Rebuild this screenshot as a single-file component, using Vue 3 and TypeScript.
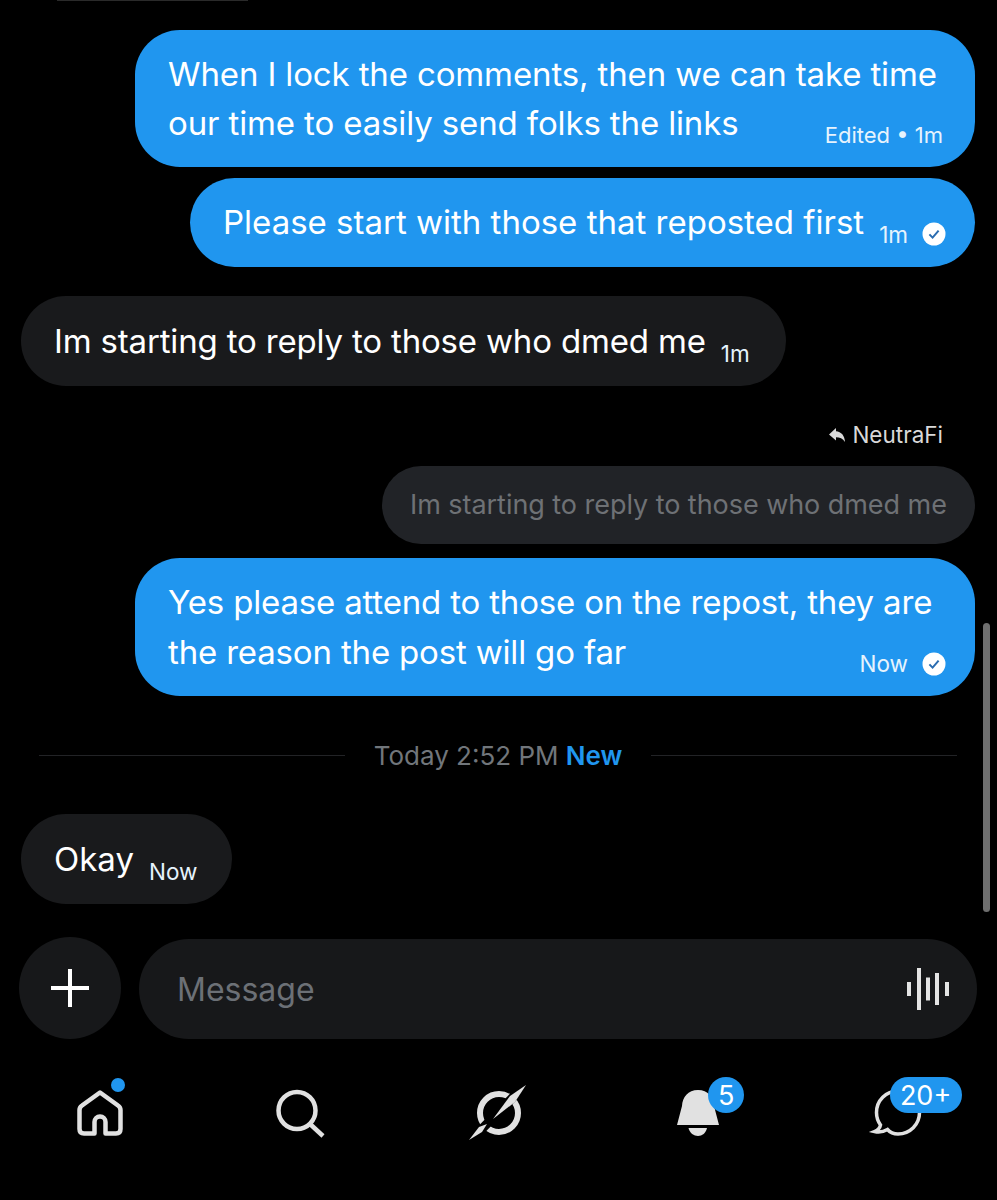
<script setup lang="ts">
const navCells = ['home', 'search', 'grok', 'bell', 'chat']
const waveBars = [
  { x: 1, h: 14 },
  { x: 11, h: 42 },
  { x: 20, h: 23 },
  { x: 29, h: 32 },
  { x: 39, h: 14 }
]
</script>

<template>
  <div class="screen">
    <div class="sliver"></div>

    <section class="thread">
      <div class="bubble mine first-bubble">
        <div>When I lock the comments, then we can take time</div>
        <div class="last-row">
          <span>our time to easily send folks the links</span>
          <span class="meta edited">Edited • 1m</span>
        </div>
      </div>

      <div class="bubble mine single second-bubble">
        <span>Please start with those that reposted first</span>
        <span class="meta lowered">1m</span>
        <svg class="seen" viewBox="0 0 24 24"><circle cx="12" cy="12" r="11.5" fill="#fff" /><path d="M7.4 12.4l3.2 3.2 6-7" fill="none" stroke="#2a6cb0" stroke-width="2" /></svg>
      </div>

      <div class="bubble theirs single third-bubble">
        <span>Im starting to reply to those who dmed me</span>
        <span class="meta lowered">1m</span>
      </div>

      <div class="reply-label">
        <svg class="reply-arrow" viewBox="0 0 16 14"><path d="M7 0L0 6.4l7 6.2V9.200c3.800 0 6.800 1.300 9 4.800C15.800 7.500 12.200 3.600 7 3.200z" fill="#d9d9d9" /></svg>
        <span>NeutraFi</span>
      </div>
      <div class="quoted">Im starting to reply to those who dmed me</div>

      <div class="bubble mine fifth-bubble">
        <div>Yes please attend to those on the repost, they are</div>
        <div class="last-row">
          <span>the reason the post will go far</span>
          <span class="now-meta">
            <span class="meta">Now</span>
            <svg class="seen" viewBox="0 0 24 24"><circle cx="12" cy="12" r="11.5" fill="#fff" /><path d="M7.4 12.4l3.2 3.2 6-7" fill="none" stroke="#2a6cb0" stroke-width="2" /></svg>
          </span>
        </div>
      </div>

      <div class="divider">
        <span class="rule"></span>
        <span class="divider-text">Today 2:52 PM <b>New</b></span>
        <span class="rule"></span>
      </div>

      <div class="bubble theirs single okay-bubble">
        <span>Okay</span>
        <span class="meta lowered">Now</span>
      </div>
    </section>

    <div class="composer">
      <button class="plus" type="button">
        <svg width="38" height="38" viewBox="0 0 38 38"><path d="M19 0v38M0 19h38" stroke="#fff" stroke-width="4" /></svg>
      </button>
      <div class="input">
        <span>Message</span>
        <svg width="44" height="44" viewBox="0 0 44 44">
          <rect v-for="bar in waveBars" :key="bar.x" :x="bar.x" :y="22 - bar.h / 2" width="4" :height="bar.h" fill="#e4e4e4" />
        </svg>
      </div>
    </div>

    <nav class="tabs">
      <div v-for="cell in navCells" :key="cell" class="tab">
        <template v-if="cell === 'home'">
          <svg class="tab-icon" viewBox="0 0 60 60" fill="none" stroke="#e1e1e1" stroke-width="4.5" stroke-linejoin="round">
            <path d="M30 9.5L48 22.5Q50.5 24.2 50.5 27V46Q50.5 50.5 46 50.5H35.5V39a5.5 5.5 0 0 0-11 0V50.5H14Q9.5 50.5 9.5 46V27Q9.5 24.2 12 22.5Z" />
          </svg>
          <span class="dot"></span>
        </template>
        <svg v-else-if="cell === 'search'" class="tab-icon" viewBox="0 0 60 60" fill="none" stroke="#e1e1e1" stroke-width="4.5">
          <circle cx="28" cy="27.5" r="18.5" />
          <path d="M41 41L54 53" />
        </svg>
        <svg v-else-if="cell === 'grok'" class="tab-icon" viewBox="0 0 60 60">
          <circle cx="31" cy="30" r="19" fill="none" stroke="#e1e1e1" stroke-width="6" />
          <path d="M52 7L8 52" stroke="#000" stroke-width="9" />
          <path d="M58 2L47 19L25 36L42 13Z" fill="#e1e1e1" />
          <path d="M1 57L11 44L19 41L14 49Z" fill="#e1e1e1" />
        </svg>
        <template v-else-if="cell === 'bell'">
          <svg class="tab-icon" viewBox="0 0 60 60" fill="#e1e1e1">
            <path d="M30 7C20 7 14.5 14 14 23L9 42H51L46 23C45.5 14 40 7 30 7Z" />
            <path d="M20.5 45H39C38 50 34 53 30 53C26 53 21.5 50 20.5 45Z" />
          </svg>
          <span class="badge bell-badge">5</span>
        </template>
        <template v-else>
          <svg class="tab-icon" viewBox="0 0 60 60" fill="none" stroke="#e1e1e1" stroke-width="3.5">
            <path d="M31 8C19 8 9.5 17.5 9.5 29.5C9.5 34 11 38.5 13.5 42C13 45 11 47 7.5 48.5C12 49.5 17 48.5 20.5 46.5C23.5 50 27 51 31 51C43 51 52.5 41.5 52.5 29.5C52.5 17.5 43 8 31 8Z" />
          </svg>
          <span class="badge chat-badge">20+</span>
        </template>
      </div>
    </nav>

    <div class="scrollbar"></div>
  </div>
</template>

<style scoped>
.screen {
  position: relative;
  width: 997px;
  height: 1200px;
  overflow: hidden;
  background: #000;
  color: #fff;
  font-family: Inter, "Liberation Sans", sans-serif;
}

.sliver {
  width: 191px;
  height: 1px;
  margin-left: 57px;
  background: #2a2a2a;
}

.thread {
  display: flex;
  flex-direction: column;
  padding: 29px 22px 0 21px;
}

.bubble {
  box-sizing: border-box;
  border-radius: 45px;
  font-size: 33px;
  line-height: 49px;
  letter-spacing: -0.17px;
  white-space: nowrap;
}

.mine {
  align-self: flex-end;
  background: #2096ef;
}

.theirs {
  align-self: flex-start;
  background: #191a1c;
}

.single {
  display: flex;
  align-items: center;
  height: 90px;
  padding: 0 33px;
}

.first-bubble {
  width: 840px;
  height: 137px;
  padding: 20px 32px 0 33px;
  letter-spacing: -0.13px;
}

.second-bubble {
  width: 785px;
  height: 89px;
  margin-top: 11px;
  letter-spacing: 0;
}

.third-bubble {
  width: 765px;
  margin-top: 29px;
}

.okay-bubble {
  width: 211px;
  margin-top: 0;
  letter-spacing: 0;
}

.fifth-bubble {
  width: 840px;
  height: 138px;
  margin-top: 14px;
  padding: 19px 29px 0 33px;
  line-height: 50px;
}

.last-row {
  display: flex;
  justify-content: space-between;
}

.meta {
  font-size: 22.5px;
  letter-spacing: 0;
  color: #e6f3fd;
}

.meta.edited {
  font-size: 22px;
}

.last-row .meta {
  padding-top: 12px;
}

.lowered {
  flex: none;
  margin: 24px 0 0 15px;
}

.now-meta {
  display: flex;
  align-items: center;
  gap: 14px;
}

.seen {
  flex: none;
  width: 24px;
  height: 24px;
  margin: 22px 0 0 14px;
}

.now-meta .seen {
  margin: 11px 0 0;
}

.reply-label {
  display: flex;
  align-items: center;
  align-self: flex-end;
  gap: 7px;
  margin: 33px 32px 0 0;
  font-size: 22.5px;
  line-height: 32px;
  color: #d9d9d9;
}

.reply-arrow {
  width: 16px;
  height: 14px;
}

.quoted {
  align-self: flex-end;
  box-sizing: border-box;
  width: 593px;
  height: 78px;
  margin-top: 15px;
  padding: 0 29px 0 28px;
  border-radius: 39px;
  background: #212327;
  color: #6e7175;
  font-size: 27px;
  letter-spacing: -0.05px;
  line-height: 78px;
  white-space: nowrap;
}

.divider {
  display: flex;
  align-items: center;
  height: 118px;
  margin-left: 18px;
  margin-right: 18px;
}

.rule {
  flex: 1;
  height: 1px;
  background: #222326;
}

.divider-text {
  padding: 0 29px;
  color: #71767b;
  font-size: 26px;
}

.divider-text b {
  color: #2096ef;
  font-weight: 600;
}

.composer {
  display: flex;
  gap: 18px;
  align-items: flex-start;
  margin-top: 33px;
  padding: 0 20px 0 19px;
}

.plus {
  display: flex;
  flex: none;
  align-items: center;
  justify-content: center;
  width: 102px;
  height: 102px;
  padding: 0;
  border: 0;
  border-radius: 50%;
  background: #17181a;
}

.input {
  display: flex;
  flex: 1;
  align-items: center;
  justify-content: space-between;
  height: 100px;
  margin-top: 2px;
  padding: 0 27px 0 38px;
  border-radius: 50px;
  background: #17181a;
  color: #6c7076;
  font-size: 32px;
}

.tabs {
  display: grid;
  grid-template-columns: repeat(5, 1fr);
  margin-top: 44px;
}

.tab {
  position: relative;
  display: flex;
  justify-content: center;
}

.tab-icon {
  width: 60px;
  height: 60px;
  overflow: visible;
}

.dot {
  position: absolute;
  top: -5px;
  left: 111px;
  width: 14px;
  height: 14px;
  border-radius: 50%;
  background: #2096ef;
}

.badge {
  position: absolute;
  display: flex;
  align-items: center;
  justify-content: center;
  height: 36px;
  border-radius: 18px;
  background: #2096ef;
  color: #fff;
  font-size: 27px;
}

.bell-badge {
  top: -6px;
  left: 110px;
  width: 36px;
}

.chat-badge {
  top: -6px;
  left: 92px;
  width: 72px;
}

.scrollbar {
  position: absolute;
  top: 623px;
  left: 983px;
  width: 7px;
  height: 289px;
  border-radius: 4px;
  background: #6f6f6f;
}
</style>
